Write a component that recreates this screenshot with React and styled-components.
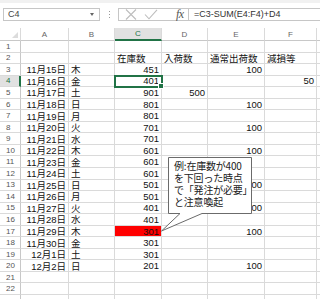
import React from 'react';
import styled, { createGlobalStyle, css } from 'styled-components';

const GlobalStyle = createGlobalStyle`
  html, body {
    margin: 0;
    padding: 0;
    background: #fff;
  }
  body {
    width: 320px;
    height: 299px;
    overflow: hidden;
    font-family: "Liberation Sans", "Noto Sans CJK JP", sans-serif;
  }
`;

const GREEN = '#217346';
const GRID = '#dadada';
const COLS = '21px 48px 46px 47px 46px 57px 52px 1fr';

const Page = styled.div`
  position: relative;
  width: 320px;
  height: 299px;
  overflow: hidden;
  display: flex;
  flex-direction: column;
`;

const FormulaBar = styled.div`
  flex-shrink: 0;
  height: 28px;
  display: flex;
  align-items: center;
  padding: 0 0 3px 3px;
  box-sizing: border-box;
  border-top: 3px solid #f1f1f1;
`;

const NameBox = styled.div`
  width: 97px;
  height: 13px;
  box-sizing: border-box;
  border: 1px solid #c6c6c6;
  display: flex;
  align-items: center;
  justify-content: space-between;
  padding: 0 5px 0 4px;
  font-size: 9px;
  color: #444;
`;

const Caret = styled.span`
  width: 0;
  height: 0;
  border-left: 2.5px solid transparent;
  border-right: 2.5px solid transparent;
  border-top: 3px solid #666;
`;

const Grip = styled.div`
  width: 18px;
  display: flex;
  flex-direction: column;
  align-items: center;
  gap: 2px;
  span {
    width: 1px;
    height: 1px;
    background: #999;
  }
`;

const FormulaBox = styled.div`
  flex: 1;
  height: 13px;
  box-sizing: border-box;
  border: 1px solid #c6c6c6;
  border-right: none;
  display: flex;
  align-items: center;
`;

const Buttons = styled.div`
  width: 70px;
  height: 100%;
  display: flex;
  align-items: center;
  border-right: 1px solid #c6c6c6;
  box-sizing: border-box;
  padding-left: 6px;
  gap: 7px;
`;

const Fx = styled.span`
  font-family: "Liberation Serif", serif;
  font-style: italic;
  font-size: 12px;
  color: #555;
  margin-left: 11px;
  letter-spacing: -0.5px;
`;

const Formula = styled.span`
  padding-left: 5px;
  font-size: 9px;
  color: #333;
  white-space: nowrap;
`;

const Sheet = styled.div`
  flex-shrink: 0;
  display: grid;
  grid-template-columns: ${COLS};
  grid-template-rows: 13px repeat(23, 11.55px);
`;

const Corner = styled.div`
  border-right: 1px solid ${GRID};
  border-bottom: 1px solid #c8c8c8;
  position: relative;
  &::after {
    content: '';
    position: absolute;
    right: 2px;
    bottom: 2px;
    border-left: 6px solid transparent;
    border-bottom: 6px solid #dcdcdc;
  }
`;

const ColHead = styled.div`
  box-sizing: border-box;
  display: flex;
  align-items: center;
  justify-content: center;
  font-size: 8px;
  color: #666;
  border-right: 1px solid ${GRID};
  border-bottom: 1px solid #c8c8c8;
  ${(p) =>
    p.$active &&
    css`
      background: #e1e1e1;
      color: ${GREEN};
      border-bottom: 2px solid ${GREEN};
    `}
`;

const RowHead = styled.div`
  box-sizing: border-box;
  display: flex;
  align-items: center;
  padding-left: 6px;
  font-size: 8px;
  color: #555;
  border-right: 1px solid #c8c8c8;
  border-bottom: 1px solid ${GRID};
  ${(p) =>
    p.$active &&
    css`
      background: #e1e1e1;
      color: ${GREEN};
      border-right: 2px solid ${GREEN};
    `}
`;

const Cell = styled.div`
  box-sizing: border-box;
  position: relative;
  display: flex;
  align-items: center;
  justify-content: ${(p) => (p.$right ? 'flex-end' : 'flex-start')};
  padding: 0 2px;
  font-size: 9.5px;
  color: #111;
  white-space: nowrap;
  border-right: 1px solid ${GRID};
  border-bottom: 1px solid ${GRID};
  background: ${(p) => p.$bg || 'transparent'};
  ${(p) =>
    p.$selected &&
    css`
      outline: 2px solid ${GREEN};
      outline-offset: -1px;
      z-index: 1;
      &::after {
        content: '';
        position: absolute;
        right: -3px;
        bottom: -3px;
        width: 4px;
        height: 4px;
        background: ${GREEN};
        border: 1px solid #fff;
      }
    `}
`;

const Callout = styled.div`
  position: absolute;
  left: 160px;
  top: 156px;
  width: 94px;
  height: 78px;
`;

const CalloutText = styled.div`
  position: absolute;
  left: 14px;
  top: 4px;
  font-size: 10px;
  line-height: 12px;
  color: #222;
  font-family: "Noto Sans CJK JP", sans-serif;
  letter-spacing: -0.2px;
`;

const days = ['木', '金', '土', '日', '月', '火', '水'];
const stock = [451, 401, 901, 801, 801, 701, 701, 601, 601, 601, 501, 501, 401, 401, 301, 301, 301, 201];
const arrivals = { 5: '500' };
const shipped = { 3: '100', 6: '100', 8: '100', 10: '100', 13: '100', 15: '100', 17: '100', 20: '100' };
const loss = { 4: '50' };

// 23 grid rows: 22 numbered, the last one is cut off by the window edge
const rows = Array.from({ length: 23 }, (_, i) => {
  const n = i + 1;
  if (n === 2) return { n, c: '在庫数', d: '入荷数', e: '通常出荷数', f: '減損等', head: true };
  if (n >= 3 && n <= 20) {
    const k = n - 3;
    const day = 15 + k;
    const date = day <= 30 ? `11月${day}日` : `12月${day - 30}日`;
    return {
      n,
      a: date,
      b: days[k % 7],
      c: String(stock[k]),
      d: arrivals[n],
      e: shipped[n],
      f: loss[n],
    };
  }
  return { n };
});

const X = () => (
  <svg width="12" height="11" viewBox="0 0 12 11">
    <path d="M1 0.5 L11 10.5 M11 0.5 L1 10.5" stroke="#bdbdbd" strokeWidth="1.1" fill="none" />
  </svg>
);

const Check = () => (
  <svg width="14" height="11" viewBox="0 0 14 11">
    <path d="M1 5.5 L5 9.8 L13 0.8" stroke="#bdbdbd" strokeWidth="1.1" fill="none" />
  </svg>
);

export default function App() {
  return (
    <Page>
      <GlobalStyle />
      <FormulaBar>
        <NameBox>
          C4
          <Caret />
        </NameBox>
        <Grip>
          <span />
          <span />
          <span />
        </Grip>
        <FormulaBox>
          <Buttons>
            <X />
            <Check />
            <Fx>fx</Fx>
          </Buttons>
          <Formula>=C3-SUM(E4:F4)+D4</Formula>
        </FormulaBox>
      </FormulaBar>

      <Sheet>
        <Corner />
        {['A', 'B', 'C', 'D', 'E', 'F', 'G'].map((c) => (
          <ColHead key={c} $active={c === 'C'}>
            {c === 'G' ? '' : c}
          </ColHead>
        ))}
        {rows.map((r) => (
          <React.Fragment key={r.n}>
            <RowHead $active={r.n === 4}>{r.n <= 22 ? r.n : ''}</RowHead>
            <Cell $right>{r.a}</Cell>
            <Cell>{r.b}</Cell>
            <Cell $right={!r.head} $selected={r.n === 4} $bg={r.n === 17 ? '#ff0000' : undefined}>
              {r.c}
            </Cell>
            <Cell $right={!r.head}>{r.d}</Cell>
            <Cell $right={!r.head}>{r.e}</Cell>
            <Cell $right={!r.head}>{r.f}</Cell>
            <Cell />
          </React.Fragment>
        ))}
      </Sheet>

      <Callout>
        <svg width="94" height="78" viewBox="0 0 94 78">
          <path
            d="M8.5 1.5 H91.5 V57.5 H42 L1.5 75 L20 57.5 H8.5 Z"
            fill="#fff"
            stroke="#6b6b6b"
            strokeWidth="1"
          />
        </svg>
        <CalloutText>
          例:在庫数が400
          <br />
          を下回った時点
          <br />
          で「発注が必要」
          <br />
          と注意喚起
        </CalloutText>
      </Callout>
    </Page>
  );
}
